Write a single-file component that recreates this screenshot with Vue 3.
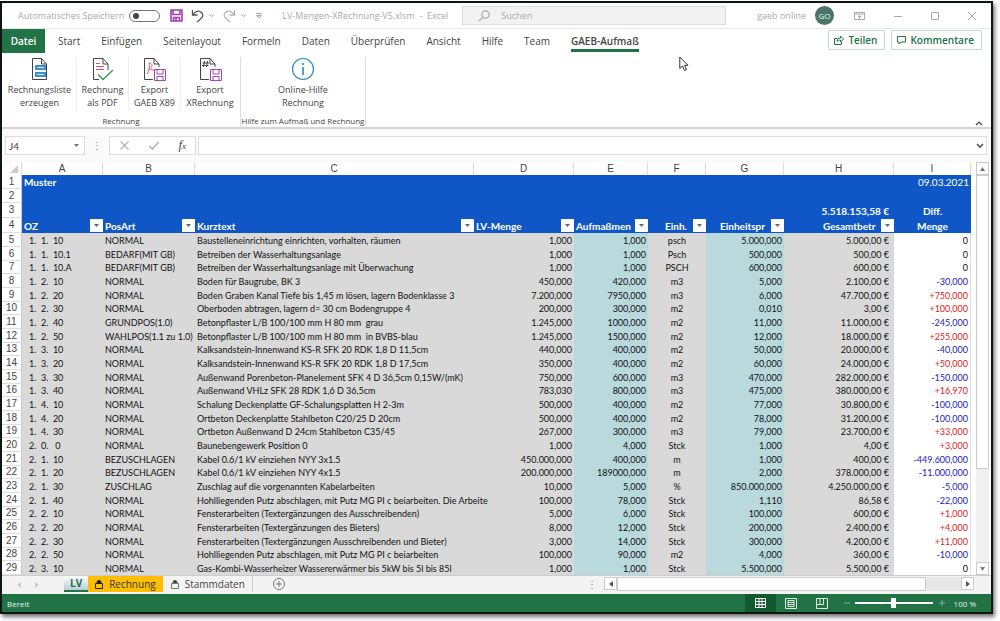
<script setup>
const tabs = ['Start', 'Einfügen', 'Seitenlayout', 'Formeln', 'Daten', 'Überprüfen', 'Ansicht', 'Hilfe', 'Team']
const letters = ['A', 'B', 'C', 'D', 'E', 'F', 'G', 'H', 'I']
const rows = `1.  1.  10|NORMAL|Baustelleneinrichtung einrichten, vorhalten, räumen|1,000|1,000|psch|5.000,000|5.000,00 €|0
1.  1.  10.1|BEDARF(MIT GB)|Betreiben der Wasserhaltungsanlage|1,000|1,000|Psch|500,000|500,00 €|0
1.  1.  10.A|BEDARF(MIT GB)|Betreiben der Wasserhaltungsanlage mit Überwachung|1,000|1,000|PSCH|600,000|600,00 €|0
1.  2.  10|NORMAL|Boden für Baugrube, BK 3|450,000|420,000|m3|5,000|2.100,00 €|-30,000
1.  2.  20|NORMAL|Boden Graben Kanal Tiefe bis 1,45 m lösen, lagern Bodenklasse 3|7.200,000|7950,000|m3|6,000|47.700,00 €|+750,000
1.  2.  30|NORMAL|Oberboden abtragen, lagern d= 30 cm Bodengruppe 4|200,000|300,000|m2|0,010|3,00 €|+100,000
1.  2.  40|GRUNDPOS(1.0)|Betonpflaster L/B 100/100 mm H 80 mm  grau|1.245,000|1000,000|m2|11,000|11.000,00 €|-245,000
1.  2.  50|WAHLPOS(1.1 zu 1.0)|Betonpflaster L/B 100/100 mm H 80 mm  in BVBS-blau|1.245,000|1500,000|m2|12,000|18.000,00 €|+255,000
1.  3.  10|NORMAL|Kalksandstein-Innenwand KS-R SFK 20 RDK 1,8 D 11,5cm|440,000|400,000|m2|50,000|20.000,00 €|-40,000
1.  3.  20|NORMAL|Kalksandstein-Innenwand KS-R SFK 20 RDK 1,8 D 17,5cm|350,000|400,000|m2|60,000|24.000,00 €|+50,000
1.  3.  30|NORMAL|Außenwand Porenbeton-Planelement SFK 4 D 36,5cm 0,15W/(mK)|750,000|600,000|m3|470,000|282.000,00 €|-150,000
1.  3.  40|NORMAL|Außenwand VHLz SFK 28 RDK 1,6 D 36,5cm|783,030|800,000|m3|475,000|380.000,00 €|+16,970
1.  4.  10|NORMAL|Schalung Deckenplatte GF-Schalungsplatten H 2-3m|500,000|400,000|m2|77,000|30.800,00 €|-100,000
1.  4.  20|NORMAL|Ortbeton Deckenplatte Stahlbeton C20/25 D 20cm|500,000|400,000|m2|78,000|31.200,00 €|-100,000
1.  4.  30|NORMAL|Ortbeton Außenwand D 24cm Stahlbeton C35/45|267,000|300,000|m3|79,000|23.700,00 €|+33,000
2.  0.   0|NORMAL|Baunebengewerk Position 0|1,000|4,000|Stck|1,000|4,00 €|+3,000
2.  1.  10|BEZUSCHLAGEN|Kabel 0.6/1 kV einziehen NYY 3x1.5|450.000,000|400,000|m|1,000|400,00 €|-449.600,000
2.  1.  20|BEZUSCHLAGEN|Kabel 0.6/1 kV einziehen NYY 4x1.5|200.000,000|189000,000|m|2,000|378.000,00 €|-11.000,000
2.  1.  30|ZUSCHLAG|Zuschlag auf die vorgenannten Kabelarbeiten|10,000|5,000|%|850.000,000|4.250.000,00 €|-5,000
2.  1.  40|NORMAL|Hohlliegenden Putz abschlagen, mit Putz MG PI c beiarbeiten. Die Arbeite|100,000|78,000|Stck|1,110|86,58 €|-22,000
2.  2.  10|NORMAL|Fensterarbeiten (Textergänzungen des Ausschreibenden)|5,000|6,000|Stck|100,000|600,00 €|+1,000
2.  2.  20|NORMAL|Fensterarbeiten (Textergänzungen des Bieters)|8,000|12,000|Stck|200,000|2.400,00 €|+4,000
2.  2.  30|NORMAL|Fensterarbeiten (Textergänzungen Ausschreibenden und Bieter)|3,000|14,000|Stck|300,000|4.200,00 €|+11,000
2.  2.  50|NORMAL|Hohlliegenden Putz abschlagen, mit Putz MG PI c beiarbeiten|100,000|90,000|m2|4,000|360,00 €|-10,000
2.  3.  10|NORMAL|Gas-Kombi-Wasserheizer Wassererwärmer bis 5kW bis 5l bis 85l|1,000|1,000|Stck|5.500,000|5.500,00 €|0`
  .split('\n')
  .map((line) => line.split('|'))
const heads = ['OZ', 'PosArt', 'Kurztext', 'LV-Menge', 'Aufmaßmen', 'Einh.', 'Einheitspr', 'Gesamtbetr']
const sign = (v) => (v[0] === '-' ? 'minus' : v[0] === '+' ? 'plus' : '')
</script>

<template>
  <div class="window">
    <header class="titlebar">
      <label class="autosave" for="autosave">Automatisches Speichern</label>
      <input id="autosave" class="switch" type="checkbox" />
      <button class="ico save" aria-label="Speichern">
        <svg width="13" height="13" viewBox="0 0 13 13" fill="none" stroke="#a03fae" stroke-width="1.6"><path d="M1 1h11v11H1zM3 1v4.5h7V1M3.500 12V8.500h6V12M6 9v3" /></svg>
      </button>
      <button class="ico undo" aria-label="Rückgängig">
        <svg width="13" height="14" viewBox="0 0 13 14" fill="none" stroke="#555" stroke-width="1.300"><path d="M1.500 1v5h5M1.500 6C4 2 8 1 10.500 3.500s1 5-1 6.500L6 13" /></svg>
      </button>
      <svg class="tiny" width="5" height="4" viewBox="0 0 5 4" fill="none" stroke="#aaa"><path d="M.5.5l2 2 2-2" /></svg>
      <button class="ico redo" aria-label="Wiederholen">
        <svg width="13" height="14" viewBox="0 0 13 14" fill="none" stroke="#b5b5b5" stroke-width="1.300"><path d="M11.500 1v5h-5M11.500 6C9 2 5 1 2.500 3.500s-1 5 1 6.500L7 13" /></svg>
      </button>
      <svg class="tiny" width="5" height="4" viewBox="0 0 5 4" fill="none" stroke="#aaa"><path d="M.5.5l2 2 2-2" /></svg>
      <svg class="more" width="6" height="7" viewBox="0 0 6 7" fill="none" stroke="#aaa"><path d="M0 1.500h6M.5 3.500l2.500 2.500 2.500-2.500z" /></svg>
      <span class="doc">LV-Mengen-XRechnung-V5.xlsm&nbsp; -&nbsp; Excel</span>
      <label class="search">
        <svg width="12" height="12" viewBox="0 0 12 12" fill="none" stroke="#aaa" stroke-width="1.200"><circle cx="7.500" cy="4.500" r="3.700" /><path d="M5 7L.8 11.200" /></svg>
        <input type="text" placeholder="Suchen" aria-label="Suchen" />
      </label>
      <span class="user">gaeb online</span>
      <span class="avatar">GO</span>
      <div class="wincontrols">
        <button class="ico" aria-label="Menüband-Anzeigeoptionen"><svg width="11" height="8" viewBox="0 0 11 8" fill="none" stroke="#aaa"><path d="M.5.5h10v7H.5zM.5 2h10M5.500 7V3.500M4 5l1.500-1.500L7 5" /></svg></button>
        <button class="ico" aria-label="Minimieren"><svg width="8" height="8" viewBox="0 0 8 8" stroke="#aaa"><path d="M0 4.500h8" /></svg></button>
        <button class="ico" aria-label="Maximieren"><svg width="8" height="8" viewBox="0 0 8 8" fill="none" stroke="#aaa"><path d="M.5.5h7v7h-7z" /></svg></button>
        <button class="ico" aria-label="Schließen"><svg width="8" height="8" viewBox="0 0 8 8" stroke="#aaa"><path d="M0 0l8 8M8 0L0 8" /></svg></button>
      </div>
    </header>

    <nav class="tabs">
      <button class="file">Datei</button>
      <button v-for="t in tabs" :key="t" class="tab">{{ t }}</button>
      <button class="tab active">GAEB-Aufmaß</button>
      <div class="actions">
        <button class="action">
          <svg width="10" height="10" viewBox="0 0 10 10" fill="none" stroke="#217346"><path d="M3 3.500H.5v6h7V6.500M3 6.500C3 4 4.500 3 6.500 3V1l3 3-3 3V5C5 5 4 5.500 3 6.500z" /></svg>Teilen
        </button>
        <button class="action">
          <svg width="9" height="9" viewBox="0 0 9 9" fill="none" stroke="#217346"><path d="M.5.5h8v5.500H4L2 8V6H.5z" /></svg>Kommentare
        </button>
      </div>
    </nav>

    <section class="ribbon">
      <div class="group">
        <div class="cmds">
          <button class="cmd c1">
            <svg width="18" height="24" viewBox="0 0 18 24" fill="none" stroke="#444"><path d="M1.500 1.500h9l5 5.500v15.500h-14zM10.500 1.500V7h5" /><path fill="#3c8fd0" stroke="none" d="M4 8h11v5H4zM4 15h11v5H4z" /><path stroke="#d4e9f8" d="M6 10.500h7M6 17.500h7" /></svg>
            <span>Rechnungsliste<br />erzeugen</span>
          </button>
          <button class="cmd c2">
            <svg width="22" height="24" viewBox="0 0 22 24" fill="none" stroke="#444"><path d="M16 13V7l-5-5.500H1.500v21H7M11 1.500V7h5" /><path stroke="#d9525e" d="M4 6.500h4M4 9.500h8M4 12.500h8" /><path stroke="#3f9350" stroke-width="1.300" d="M6 17.500l5 5L21 13" /></svg>
            <span>Rechnung<br />als PDF</span>
          </button>
          <button class="cmd c3">
            <svg width="23" height="24" viewBox="0 0 23 24" fill="none" stroke="#444"><path d="M16 10V7l-5-5.500H1.500v21H10M11 1.500V7h5" /><path stroke="#e0606a" d="M4.500 17C6 13 7 10 6 6c4 0 4 4 0 6 2 0 4 1 5 2" /><path stroke="#a048b0" fill="#fff" d="M11.500 12.500h11v11h-11zM14 12.500V17h6v-4.500M14 23.500V19.500h6v4" /></svg>
            <span>Export<br />GAEB X89</span>
          </button>
          <button class="cmd c4">
            <svg width="23" height="24" viewBox="0 0 23 24" fill="none" stroke="#444"><path d="M16 10V7l-5-5.500H1.500v21H10M11 1.500V7h5M5.500 4l-1 6M8.500 4l-1 6M3.500 6H10M3 8.500h6.500" /><path stroke="#a048b0" fill="#fff" d="M11.500 12.500h11v11h-11zM14 12.500V17h6v-4.500M14 23.500V19.500h6v4" /></svg>
            <span>Export<br />XRechnung</span>
          </button>
        </div>
        <div class="caption">Rechnung</div>
      </div>
      <div class="group help">
        <div class="cmds">
          <button class="cmd c5">
            <svg width="24" height="24" viewBox="0 0 24 24" fill="none" stroke="#2f88c4"><circle cx="12" cy="12" r="10.500" stroke-width="1.200" /><path stroke-width="1.600" d="M12 10v8M12 6v2" /></svg>
            <span>Online-Hilfe<br />Rechnung</span>
          </button>
        </div>
        <div class="caption">Hilfe zum Aufmaß und Rechnung</div>
      </div>
      <button class="ico collapse" aria-label="Menüband reduzieren"><svg width="8" height="5" viewBox="0 0 8 5" fill="none" stroke="#444" stroke-width="1.200"><path d="M1 4l3-3 3 3" /></svg></button>
    </section>

    <section class="formula">
      <label class="namebox"><input type="text" value="J4" aria-label="Namenfeld" /><svg width="5" height="3" viewBox="0 0 5 3"><path d="M0 0h5L2.500 3z" fill="#777" /></svg></label>
      <span class="dots">⋮</span>
      <div class="fx">
        <svg width="9" height="9" viewBox="0 0 9 9" stroke="#b5b5b5" stroke-width="1.300"><path d="M.5.5l8 8M8.500.5l-8 8" /></svg>
        <svg width="10" height="9" viewBox="0 0 10 9" fill="none" stroke="#b5b5b5" stroke-width="1.600"><path d="M.5 5l3 3L9.500 1" /></svg>
        <i>f<small>x</small></i>
      </div>
      <label class="content"><input type="text" aria-label="Bearbeitungsleiste" /><svg width="8" height="6" viewBox="0 0 8 6" fill="none" stroke="#555" stroke-width="1.600"><path d="M1 1l3 3 3-3" /></svg></label>
    </section>

    <main class="sheet">
      <table>
        <colgroup>
          <col class="w0" /><col v-for="l in letters" :key="l" :class="'w' + l" />
        </colgroup>
        <thead>
          <tr class="letters">
            <th><svg width="8" height="8" viewBox="0 0 8 8"><path d="M8 0v8H0z" fill="#ccc" /></svg></th>
            <th v-for="l in letters" :key="l">{{ l }}</th>
          </tr>
          <tr class="blue">
            <th class="num">1</th>
            <td class="bold">Muster</td><td colspan="7"></td><td class="right">09.03.2021</td>
          </tr>
          <tr class="blue"><th class="num">2</th><td colspan="9"></td></tr>
          <tr class="blue r3">
            <th class="num">3</th><td colspan="7"></td>
            <td class="bold right sum">5.518.153,58 €</td><td class="bold center">Diff.</td>
          </tr>
          <tr class="blue r4">
            <th class="num">4</th>
            <td v-for="(h, i) in heads" :key="h" class="bold">
              <div class="head" :class="'h' + i">
                <span>{{ h }}</span>
                <button class="filter" :aria-label="h + ' filtern'"><svg width="5" height="3" viewBox="0 0 5 3"><path d="M0 0h5L2.500 3z" fill="#666" /></svg></button>
              </div>
            </td>
            <td class="bold center">Menge</td>
          </tr>
        </thead>
        <tbody>
          <tr v-for="(r, i) in rows" :key="i">
            <th class="num">{{ i + 5 }}</th>
            <td v-for="(v, j) in r" :key="j" :class="['d' + letters[j], j === 8 ? sign(v) : '']">{{ v }}</td>
          </tr>
        </tbody>
      </table>
      <div class="vscroll">
        <button class="arrow" aria-label="Nach oben"><svg width="5" height="4" viewBox="0 0 5 4"><path d="M0 4h5L2.500 0z" fill="#777" /></svg></button>
        <div class="vthumb"></div>
        <div class="vtrack"></div>
        <button class="arrow" aria-label="Nach unten"><svg width="5" height="4" viewBox="0 0 5 4"><path d="M0 0h5L2.500 4z" fill="#777" /></svg></button>
      </div>
    </main>

    <div class="sheetbar">
      <div class="navs">
        <svg width="4" height="6" viewBox="0 0 4 6"><path d="M4 0v6L0 3z" fill="#ccc" /></svg>
        <svg width="4" height="6" viewBox="0 0 4 6"><path d="M0 0v6l4-3z" fill="#ccc" /></svg>
      </div>
      <button class="st lv">LV</button>
      <button class="st re"><svg width="8" height="9" viewBox="0 0 8 9"><path d="M2 4V2.500a2 2 0 0 1 4 0V4" fill="#222" stroke="#222" /><path d="M.5 3.500h7v5h-7z" fill="none" stroke="#222" /></svg>Rechnung</button>
      <button class="st sd"><svg width="8" height="9" viewBox="0 0 8 9"><path d="M2 4V2.500a2 2 0 0 1 4 0V4" fill="#444" stroke="#444" /><path d="M.5 3.500h7v5h-7z" fill="none" stroke="#777" /></svg>Stammdaten</button>
      <button class="ico add" aria-label="Neues Blatt"><svg width="12" height="12" viewBox="0 0 12 12" fill="none" stroke="#777"><circle cx="6" cy="6" r="5.500" /><path d="M6 3v6M3 6h6" /></svg></button>
      <div class="hscroll">
        <span class="dots">⋮</span>
        <button class="arrow" aria-label="Nach links"><svg width="4" height="6" viewBox="0 0 4 6"><path d="M4 0v6L0 3z" fill="#555" /></svg></button>
        <div class="hthumb"></div>
        <div class="htrack"></div>
        <button class="arrow" aria-label="Nach rechts"><svg width="4" height="6" viewBox="0 0 4 6"><path d="M0 0v6l4-3z" fill="#555" /></svg></button>
      </div>
    </div>

    <footer class="status">
      <span class="ready">Bereit</span>
      <button class="view on" aria-label="Normal"><svg width="11" height="10" viewBox="0 0 11 10" fill="none" stroke="#fff"><path d="M.5.5h10v9H.5zM.5 3.500h10M.5 6.500h10M4 0v10M7 0v10" /></svg></button>
      <button class="view" aria-label="Seitenlayout"><svg width="12" height="11" viewBox="0 0 12 11" fill="none" stroke="#dcebe2"><path d="M.5.5h11v10H.5zM3 2.500h6v6H3zM3 4.500h6M3 6.500h6" /></svg></button>
      <button class="view" aria-label="Umbruchvorschau"><svg width="12" height="11" viewBox="0 0 12 11" fill="none" stroke="#dcebe2"><path d="M.5.5h11v10H.5zM4 0v6.500M7.500 0v6.500M.5 6.500h7" /></svg></button>
      <svg class="sgn" width="6" height="6" viewBox="0 0 6 6" stroke="#7fb093"><path d="M0 3h6" /></svg>
      <input class="zoom" type="range" min="0" max="100" value="50" aria-label="Zoom" />
      <svg class="sgn" width="6" height="6" viewBox="0 0 6 6" stroke="#7fb093"><path d="M0 3h6M3 0v6" /></svg>
      <span class="pct">100 %</span>
    </footer>
    <svg class="cursor" width="10" height="16" viewBox="0 0 10 16" fill="#fff" stroke="#333"><path d="M.8 1v11.500L3.500 10l2 4.500 2-1-2-4.200H9z" /></svg>
  </div>
</template>

<style>
body { background: #fff; }
</style>

<style scoped>
* { box-sizing: border-box; }
button, input { font: inherit; color: inherit; margin: 0; padding: 0; border: 0; background: none; }
svg { flex: none; display: block; }
.window {
  position: relative; display: flex; flex-direction: column;
  margin: 1px 7px 7px 0; border: 2px solid #0c1510;
  box-shadow: 2px 3px 4px #777;
  font: 10px/13px "Open Sans", "Noto Sans", sans-serif; color: #444; background: #fff;
}
.titlebar { display: flex; align-items: center; height: 26px; border-bottom: 1px solid #e8e8e8; color: #aaa; padding-left: 16px; font-size: 9px; }
.ico { display: flex; align-items: center; justify-content: center; }
.switch { appearance: none; width: 31px; height: 12px; margin-left: 5px; border: 1px solid #777; border-radius: 6px; display: flex; align-items: center; padding-left: 3px; }
.switch::before { content: ""; width: 6px; height: 6px; border-radius: 3px; background: #444; }
.save { margin-left: 10px; }
.undo { margin-left: 8px; }
.redo { margin-left: 9px; }
.tiny { margin-left: 5px; }
.more { margin-left: 10px; }
.doc { margin-left: 20px; width: 180px; white-space: nowrap; }
.search { display: flex; align-items: center; flex: 1; height: 19px; gap: 11px; padding-left: 15px; background: #f3f2f2; border: 1px solid #ddd; }
.search input { flex: 1; min-width: 0; }
.search input::placeholder { color: #aaa; }
.user { margin-left: 31px; }
.avatar { width: 19px; height: 19px; margin-left: 9px; border-radius: 50%; background: #4c7468; color: #dfe; font-size: 8px; line-height: 19px; text-align: center; }
.wincontrols { display: flex; gap: 29px; padding: 0 15px 0 20px; }

.tabs { display: flex; height: 24px; align-items: stretch; }
.file { width: 43px; background: #217346; color: #fff; font-weight: 600; margin-right: 13px; }
.tab { margin-right: 21px; }
.active { font-weight: 600; position: relative; margin: 0; }
.active::after { content: ""; position: absolute; left: 0; right: 0; bottom: 1px; height: 3px; background: #217346; }
.actions { display: flex; gap: 6px; margin: 1px 9px 3px auto; }
.action { display: flex; align-items: center; gap: 4px; padding: 0 7px 0 5px; border: 1px solid #c5d9cc; color: #217346; font-weight: 600; border-radius: 1px; }

.ribbon { display: flex; height: 76px; border-bottom: 2px solid #d5d5d5; padding-top: 4px; font-size: 9px; }
.group { display: flex; flex-direction: column; width: 239px; border-right: 1px solid #ddd; }
.group.help { width: 125px; }
.cmds { display: flex; justify-content: center; }
.cmd { display: flex; flex-direction: column; align-items: center; gap: 2px; line-height: 13px; height: 53px; border-right: 1px solid #eee; white-space: nowrap; }
.c1 { width: 74px; } .c2 { width: 52px; } .c3 { width: 52px; } .c4 { width: 58px; border: 0; } .c5 { border: 0; }
.caption { text-align: center; font-size: 8px; line-height: 12px; margin-top: 5px; white-space: nowrap; }
.collapse { margin: auto 8px 1px auto; }

.formula { display: flex; height: 33px; padding: 7px 4px 7px 3px; background: #fafafa; font: 10px "Lato", sans-serif; }
.namebox, .fx, .content { display: flex; align-items: center; background: #fff; border: 1px solid #ddd; }
.namebox { width: 80px; padding: 0 5px 0 3px; }
.namebox input, .content input { flex: 1; min-width: 0; }
.dots { width: 24px; text-align: center; line-height: 18px; color: #888; }
.fx { width: 87px; justify-content: space-between; padding: 0 9px 0 10px; margin-right: 2px; }
.fx i { font: italic 13px/16px "Liberation Serif", serif; }
.fx small { font-size: 9px; }
.content { flex: 1; padding-right: 2px; }

.sheet { display: flex; background: #fff; }
table { flex: 1; min-width: 0; table-layout: fixed; border-collapse: separate; border-spacing: 0; font: 9px/13px "Lato", sans-serif; color: #111; margin-right: 5px; width: 100%; }
.w0 { width: 20px; } .wA { width: 81px; } .wB { width: 92px; } .wD { width: 100px; } .wE { width: 74px; }
.wF { width: 58px; } .wG { width: 78px; } .wH { width: 110px; } .wI { width: 77px; }
td, th { padding: 0; white-space: pre; height: 14px; }
tbody tr:nth-child(3n) > * { height: 13px; }
.letters th { height: 13px; font: 10px/13px "Liberation Sans", sans-serif; color: #444; border-right: 1px solid #ddd; background: #fff; }
.letters th svg { margin-left: 8px; }
.num { font: 10px/12px "Liberation Sans", sans-serif; color: #444; border-right: 1px solid #ccc; border-bottom: 1px solid #ddd; text-align: center; background: #fff; }
.blue td { background: #0f57c6; color: #fff; font-size: 10px; line-height: 12px; padding: 0 2px; }
.blue.r3 > *, .blue.r4 > * { height: 15px; }
.bold { font-weight: 700; }
.right { text-align: right; } .center { text-align: center; }
.blue td.sum { padding-right: 5px; }
.blue.r4 td:has(.head) { padding: 0; }
.head { display: flex; align-items: center; height: 15px; }
.head span { flex: 1; min-width: 0; padding-left: 2px; }
.head .filter { flex: none; display: flex; align-items: center; justify-content: center; width: 13px; height: 13px; background: #fff; position: relative; }
.h5 span { padding-left: 17px; } .h6 span { padding-left: 14px; } .h7 span { padding-left: 39px; }
tbody td { background: #d9d9d9; padding: 0 2px; }
tbody .dA { padding-left: 7px; }
.dD, .dE, .dG, .dH, .dI { text-align: right; }
tbody .dE, tbody .dG { background: #b9d9dd; }
.dF { text-align: center; }
tbody .dH { padding-right: 5px; }
tbody .dI { background: #fff; border-right: 1px solid #ddd; }
.minus { color: #2222bb; } .plus { color: #dd2222; }
.vscroll { display: flex; flex-direction: column; width: 13px; margin-right: 2px; background: #f0f0f0; }
.arrow { display: flex; align-items: center; justify-content: center; width: 13px; height: 13px; background: #fff; border: 1px solid #ccc; }
.vthumb { flex: 293; background: #fff; border: 1px solid #ccc; }
.vtrack { flex: 93; }

.sheetbar { display: flex; height: 19px; align-items: flex-start; background: #f3f3f3; border-top: 1px solid #ccc; font-size: 10px; }
.navs { display: flex; gap: 14px; padding: 6px 25px 0 15px; }
.st { display: flex; align-items: center; gap: 6px; height: 16px; padding: 0 7px; }
.lv { padding: 0 6px; font-weight: 700; color: #217346; background: linear-gradient(#fff, #b9ccd6); border-bottom: 2px solid #217346; }
.re { background: #ffbf00; color: #333; }
.sd { border-right: 1px solid #ccc; padding-left: 8px; }
.add { margin: 2px 0 0 20px; }
.hscroll { display: flex; margin: 1px 17px 0 auto; width: 394px; }
.hscroll .dots { line-height: 14px; }
.hthumb { flex: 311; background: #fff; border: 1px solid #ccc; }
.htrack { flex: 35; background: #e8e8e8; }

.status { display: flex; align-items: center; height: 18px; background: #217346; color: #e5f1ea; font-size: 8px; }
.ready { margin: 0 auto 0 5px; }
.view { width: 31px; height: 18px; display: flex; align-items: center; justify-content: center; }
.on { background: #11592f; }
.sgn { margin-left: 6px; }
.zoom { appearance: none; width: 78px; height: 11px; margin-left: 5px; background: linear-gradient(#fff, #fff) center / 100% 2px no-repeat; }
.zoom::-webkit-slider-thumb { appearance: none; width: 5px; height: 10px; background: #fff; }
.pct { margin: 0 15px 0 9px; }
.cursor { position: absolute; left: 677px; top: 53px; }
</style>
